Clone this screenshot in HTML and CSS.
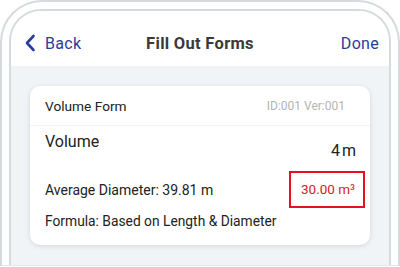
FILE: index.html
```html
<!DOCTYPE html>
<html lang="en">
  <head>
    <meta charset="UTF-8" />
    <meta name="viewport" content="width=device-width, initial-scale=1.0" />
    <title>Fill Out Forms</title>
    <link rel="stylesheet" href="styles.css">
  </head>
  <body>
    <section class="phone">
      <div class="screen">
        <header class="topbar">
          <a href="#" class="back">
            <svg width="12" height="18" viewBox="0 0 12 18"><path d="M9.5 2 L3 9 L9.5 16" fill="none" stroke="currentColor" stroke-width="2.6" stroke-linecap="round" stroke-linejoin="round"/></svg>
            <span>Back</span>
          </a>
          <h1 class="title">Fill Out Forms</h1>
          <a href="#" class="done">Done</a>
        </header>

        <main class="content">
          <div class="card">
            <div class="card-head">
              <span>Volume Form</span>
              <span class="meta">ID:001 Ver:001</span>
            </div>
            <div class="card-body">
              <div class="row-volume">
                <span class="label">Volume</span>
                <span class="value">4<span class="unit">m</span></span>
              </div>
              <div class="row-diameter">
                <span>Average Diameter: 39.81 m</span>
                <span class="result">30.00 m³</span>
              </div>
              <div class="row-formula">Formula: Based on Length &amp; Diameter</div>
            </div>
          </div>
        </main>
      </div>
    </section>
  </body>
</html>
```

FILE: styles.css
```css
* {
  margin: 0;
  padding: 0;
  box-sizing: border-box;
}

body {
  font-family: Roboto, "Liberation Sans", Arial, sans-serif;
  background: #fff;
  width: 400px;
  height: 267px;
  overflow: hidden;
}

.phone {
  width: 400px;
  height: 266px;
  border: 2px solid #d6dadc;
  border-bottom: 1px solid #e2e6e8;
  border-radius: 42px 42px 0 0;
  padding: 7px 7px 0;
  background: #fff;
}

.screen {
  height: 100%;
  border: 2px solid #d6dadc;
  border-bottom: none;
  border-radius: 32px 32px 0 0;
  overflow: hidden;
  display: flex;
  flex-direction: column;
  background: #f1f4f7;
}

.topbar {
  height: 55px;
  flex-shrink: 0;
  background: #fff;
  display: flex;
  align-items: center;
  justify-content: space-between;
  padding: 9px 10px 0 13px;
  position: relative;
}

.back,
.done {
  color: #2a3c9c;
  text-decoration: none;
  font-size: 16px;
  letter-spacing: 0.3px;
}

.back {
  display: flex;
  align-items: center;
  gap: 9px;
}

.title {
  position: absolute;
  left: 0;
  right: 0;
  top: 9px;
  bottom: 0;
  display: flex;
  align-items: center;
  justify-content: center;
  font-size: 16.5px;
  font-weight: 700;
  color: #3a3a3a;
  letter-spacing: 0.3px;
  pointer-events: none;
}

.content {
  flex: 1;
  padding: 20px 19px 0;
}

.card {
  background: #fff;
  border-radius: 10px;
  box-shadow: 0 1px 5px rgba(0, 0, 0, 0.12);
  height: 159px;
}

.card-head {
  height: 40px;
  display: flex;
  align-items: center;
  justify-content: space-between;
  padding: 0 25px 0 15px;
  font-size: 13.7px;
  color: #222;
  border-bottom: 1px solid #f1f2f4;
}

.meta {
  font-size: 12px;
  color: #b4b4b4;
}

.card-body {
  padding: 0 14px 0 15px;
  color: #222;
}

.row-volume {
  height: 40px;
  position: relative;
}

.row-volume .label {
  position: absolute;
  left: 0;
  top: 6px;
  font-size: 16px;
}

.row-volume .value {
  position: absolute;
  right: 0;
  top: 15px;
  font-size: 16px;
}

.unit {
  margin-left: 2px;
}

.row-diameter {
  display: flex;
  align-items: center;
  justify-content: space-between;
  font-size: 14px;
  margin-top: 5px;
}

.result {
  color: #d4202a;
  border: 2px solid #e8101e;
  padding: 8px 8px 9px 10px;
  margin-right: -9px;
  font-size: 13.5px;
}

.row-formula {
  font-size: 13.8px;
  margin-top: 5px;
}
```
